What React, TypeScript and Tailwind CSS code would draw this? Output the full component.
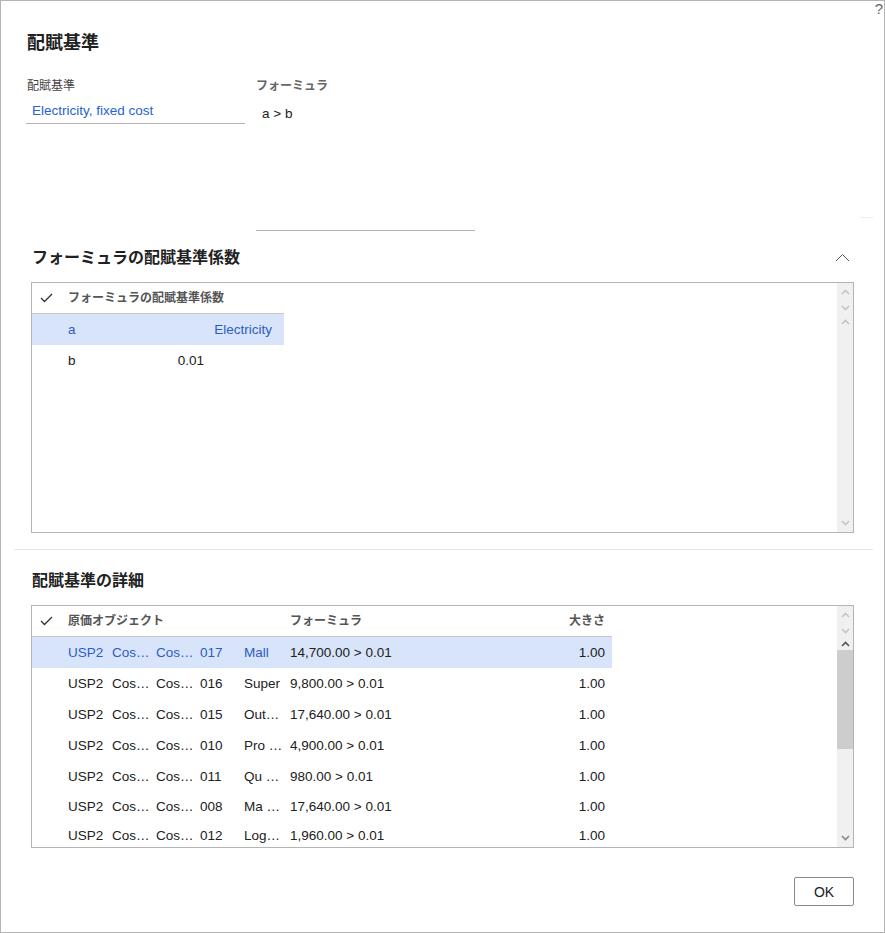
import React from 'react';

// Allocation base dialog (配賦基準) — static mock of the D365 form.

const FONT = "font-['Liberation_Sans','Noto_Sans_CJK_JP',sans-serif]";

const Caret: React.FC<{ dir: 'up' | 'down'; color?: string; className?: string }> = ({ dir, color = '#c4c4c4', className = '' }) => (
  <svg width="9" height="6" viewBox="0 0 9 6" className={className}>
    <polyline
      points={dir === 'up' ? '1,5 4.5,1.5 8,5' : '1,1 4.5,4.5 8,1'}
      fill="none"
      stroke={color}
      strokeWidth="1.6"
    />
  </svg>
);

const CheckMark: React.FC = () => (
  <svg width="13" height="10" viewBox="0 0 13 10">
    <polyline points="1,5 4.5,8.5 12,1" fill="none" stroke="#333" strokeWidth="1.3" />
  </svg>
);

const details = [
  { code: '017', name: 'Mall', formula: '14,700.00 > 0.01', h: 'h-[31px]' },
  { code: '016', name: 'Super', formula: '9,800.00 > 0.01', h: 'h-[31px]' },
  { code: '015', name: 'Out…', formula: '17,640.00 > 0.01', h: 'h-[31px]' },
  { code: '010', name: 'Pro …', formula: '4,900.00 > 0.01', h: 'h-[31px]' },
  { code: '011', name: 'Qu …', formula: '980.00 > 0.01', h: 'h-[31px]' },
  { code: '008', name: 'Ma …', formula: '17,640.00 > 0.01', h: 'h-[28px]' },
  { code: '012', name: 'Log…', formula: '1,960.00 > 0.01', h: 'h-[31px]' },
];

export default function App() {
  return (
    <div className={`relative w-[885px] h-[933px] border border-[#b4b4b4] bg-white overflow-hidden text-[#212121] ${FONT}`}>
      <span className="absolute right-[1px] top-[-2px] text-[15px] leading-[20px] text-[#666]">?</span>
      <div className="absolute left-[859px] top-[216px] w-[13px] h-px bg-[#ececec]" />

      {/* header + fields */}
      <div className="pl-[25px] pt-[29px]">
        <h1 className="pl-[1px] text-[18px] leading-[26px] font-bold">配賦基準</h1>
        <div className="flex gap-[11px] mt-[22px]">
          <div className="w-[219px]">
            <div className="pl-[1px] text-[12px] leading-[16px] text-[#444]">配賦基準</div>
            <div className="h-[30px] border-b border-[#b4b4b4] pl-[6px] pt-[8px] text-[13.5px] leading-[18px] text-[#2563d6]">
              Electricity, fixed cost
            </div>
          </div>
          <div className="w-[219px]">
            <div className="text-[12px] leading-[16px] font-bold text-[#666]">フォーミュラ</div>
            <div className="h-[137px] border-b border-[#b4b4b4] pl-[6px] pt-[11px] text-[13.5px] leading-[18px]">a &gt; b</div>
          </div>
        </div>
      </div>

      {/* formula factors */}
      <div className="pl-[30px] mt-[15px]">
        <div className="w-[823px] flex items-center justify-between h-[24px]">
          <h2 className="pl-[1px] text-[16px] leading-[24px] font-bold">フォーミュラの配賦基準係数</h2>
          <svg width="15" height="9" viewBox="0 0 15 9" className="mr-[4px] -mt-[2px]">
            <polyline points="1,8 7.5,1.5 14,8" fill="none" stroke="#555" strokeWidth="1" />
          </svg>
        </div>
        <div className="mt-[12px] w-[823px] h-[251px] border border-[#b4b4b4] flex">
          <div className="flex-1">
            <div className="w-[252px] h-[31px] border-b border-[#c8c8c8] flex items-center">
              <div className="w-[36px] pl-[8px] flex items-center"><CheckMark /></div>
              <span className="text-[12px] font-bold text-[#555]">フォーミュラの配賦基準係数</span>
            </div>
            <div className="w-[252px] h-[31px] bg-[#d8e4fa] flex items-center pt-[2px] text-[13.5px] text-[#2c5cc5]">
              <span className="pl-[36px]">a</span>
              <span className="flex-1 text-right pr-[12px]">Electricity</span>
            </div>
            <div className="w-[252px] h-[31px] flex items-center pt-[2px] text-[13.5px]">
              <span className="pl-[36px] w-[136px]">b</span>
              <span className="w-[36px] text-right">0.01</span>
            </div>
          </div>
          <div className="w-[16px] bg-[#f0f0f0] flex flex-col items-center">
            <Caret dir="up" className="mt-[6px]" />
            <Caret dir="down" className="mt-[10px]" />
            <Caret dir="up" className="mt-[8px]" />
            <div className="flex-1" />
            <Caret dir="down" className="mb-[6px]" />
          </div>
        </div>
      </div>

      <div className="ml-[13px] mt-[16px] w-[859px] h-px bg-[#e6e6e6]" />

      {/* allocation details */}
      <div className="pl-[30px] mt-[19px]">
        <h2 className="pl-[1px] h-[24px] text-[16px] leading-[24px] font-bold">配賦基準の詳細</h2>
        <div className="mt-[12px] w-[823px] h-[243px] border border-[#b4b4b4] flex overflow-hidden">
          <div className="flex-1">
            <div className="w-[580px] h-[31px] border-b border-[#c8c8c8] flex items-center text-[12px] font-bold text-[#555]">
              <div className="w-[36px] pl-[8px] flex items-center"><CheckMark /></div>
              <span className="w-[222px]">原価オブジェクト</span>
              <span className="flex-1">フォーミュラ</span>
              <span className="pr-[7px]">大きさ</span>
            </div>
            {details.map((r, i) => (
              <div
                key={r.code}
                className={`w-[580px] ${r.h} flex items-center pt-[2px] text-[13.5px] ${i === 0 ? 'bg-[#d8e4fa] text-[#2c5cc5]' : ''}`}
              >
                <span className="w-[36px]" />
                <span className="w-[44px]">USP2</span>
                <span className="w-[44px]">Cos…</span>
                <span className="w-[44px]">Cos…</span>
                <span className="w-[44px]">{r.code}</span>
                <span className="w-[46px] whitespace-nowrap">{r.name}</span>
                <span className={`flex-1 ${i === 0 ? 'text-[#212121]' : ''}`}>{r.formula}</span>
                <span className={`pr-[7px] ${i === 0 ? 'text-[#212121]' : ''}`}>1.00</span>
              </div>
            ))}
          </div>
          <div className="w-[16px] bg-[#f0f0f0] flex flex-col items-center">
            <Caret dir="up" className="mt-[6px]" />
            <Caret dir="down" className="mt-[10px]" />
            <Caret dir="up" color="#555" className="mt-[7px]" />
            <div className="w-[16px] h-[99px] mt-[3px] bg-[#cdcdcd]" />
            <div className="flex-1" />
            <Caret dir="down" color="#888" className="mb-[6px]" />
          </div>
        </div>
        <div className="w-[823px] flex justify-end mt-[29px]">
          <button className="w-[60px] h-[29px] border border-[#8a8a8a] rounded-[2px] text-[14px] leading-none bg-white">OK</button>
        </div>
      </div>
    </div>
  );
}
